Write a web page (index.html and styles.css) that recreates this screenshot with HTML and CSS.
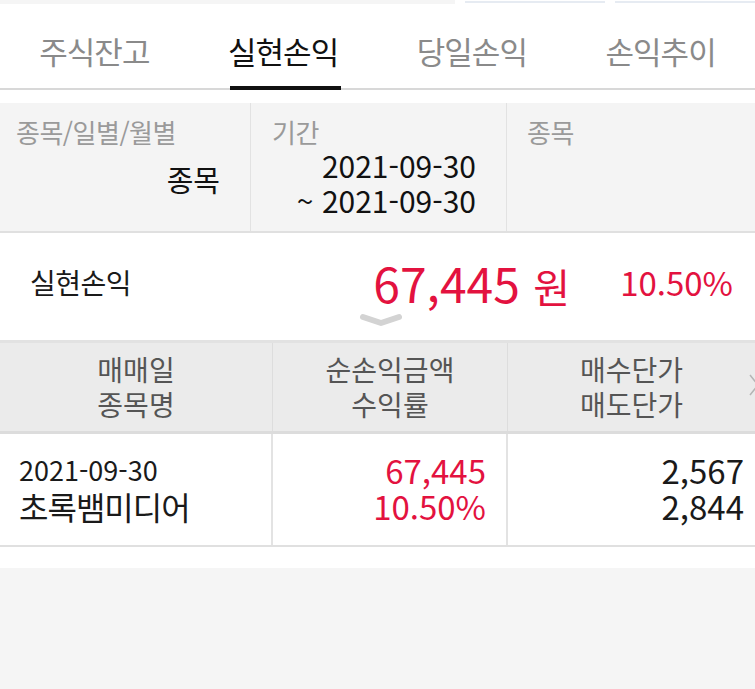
FILE: index.html
```html
<!DOCTYPE html>
<html lang="ko">
<head>
    <meta charset="UTF-8">
    <meta name="viewport" content="width=device-width, initial-scale=1.0">
    <title>실현손익</title>
    <link rel="stylesheet" href="styles.css">
</head>
<body>
    <div class="topbar">
        <div class="topbar-left"></div>
        <div class="topbar-line"></div>
        <div class="topbar-line"></div>
    </div>
    <div class="tabs">
        <div class="tab">주식잔고</div>
        <div class="tab active">실현손익</div>
        <div class="tab">당일손익</div>
        <div class="tab">손익추이</div>
    </div>

    <div class="filter">
        <div class="filter-col first">
            <div class="label">종목/일별/월별</div>
            <div class="value">종목</div>
        </div>
        <div class="filter-col second">
            <div class="label">기간</div>
            <div class="value dates">2021-09-30<br>~ 2021-09-30</div>
        </div>
        <div class="filter-col third">
            <div class="label">종목</div>
        </div>
    </div>

    <div class="summary">
        <div class="summary-title">실현손익</div>
        <div class="summary-amount">67,445 <span class="won">원</span></div>
        <div class="summary-rate">10.50%</div>
        <svg class="chevron" width="44" height="14" viewBox="0 0 44 14">
            <path d="M4 4 L22 10 L40 4" fill="none" stroke="#d3d3d3" stroke-width="6" stroke-linecap="round" stroke-linejoin="round"/>
        </svg>
    </div>

    <div class="table-head">
        <div class="th">매매일<br>종목명</div>
        <div class="th">순손익금액<br>수익률</div>
        <div class="th">매수단가<br>매도단가</div>
        <svg class="more" width="10" height="24" viewBox="0 0 10 24">
            <path d="M1 2 L9 12 L1 22" fill="none" stroke="#b5b5b5" stroke-width="1.5"/>
        </svg>
    </div>

    <div class="table-row">
        <div class="td left">
            <div class="date">2021-09-30</div>
            <div class="name">초록뱀미디어</div>
        </div>
        <div class="td right red">
            <div>67,445</div>
            <div>10.50%</div>
        </div>
        <div class="td right">
            <div>2,567</div>
            <div>2,844</div>
        </div>
    </div>

    <div class="spacer"></div>
    <div class="bottom"></div>
</body>
</html>
```

FILE: styles.css
```css
body {
    margin: 0;
    padding: 0;
    background-color: white;
    font-family: "Noto Sans CJK KR", sans-serif;
    color: #1a1a1a;
    width: 755px;
    overflow: hidden;
}
.topbar {
    display: flex;
    align-items: flex-start;
    gap: 10px;
    height: 5px;
}
.topbar-left {
    width: 455px;
    height: 4px;
    background-color: #f5f5f5;
}
.topbar-line {
    width: 140px;
    height: 2px;
    margin-top: 1px;
    background-color: #e6ebf2;
}
.tabs {
    display: grid;
    grid-template-columns: repeat(4, 1fr);
    height: 83px;
    border-bottom: 2px solid #d8d8d8;
}
.tab {
    display: flex;
    align-items: center;
    justify-content: center;
    font-size: 31px;
    color: #8a8a8a;
    letter-spacing: -1px;
    position: relative;
    padding-top: 8px;
}
.tab.active {
    color: #111;
}
.tab.active::after {
    content: "";
    position: absolute;
    left: 41px;
    right: 37px;
    bottom: -2px;
    height: 4px;
    background-color: #111;
}
.filter {
    margin-top: 13px;
    display: grid;
    grid-template-columns: 251px 256px 1fr;
    height: 128px;
    background-color: #f4f4f4;
    border-bottom: 2px solid #e0e0e0;
}
.filter-col {
    border-right: 1px solid #e2e2e2;
    padding: 10px 30px 0 16px;
    display: flex;
    flex-direction: column;
}
.filter-col.third {
    border-right: none;
    padding-left: 20px;
}
.filter-col.second {
    padding-left: 21px;
}
.label {
    font-size: 26px;
    color: #9a9a9a;
    letter-spacing: -0.5px;
}
.value {
    text-align: right;
    font-size: 30px;
    color: #111;
}
.first .value {
    font-size: 29px;
    margin-top: 8px;
}
.dates {
    line-height: 35px;
    margin-top: -2px;
}
.summary {
    position: relative;
    display: flex;
    align-items: center;
    padding: 0 22px 10px 30px;
    border-bottom: 3px solid #e2e2e2;
    box-sizing: border-box;
    height: 110px;
}
.summary-title {
    font-size: 28px;
    flex: 1;
    letter-spacing: -0.5px;
}
.summary-amount {
    font-size: 48px;
    color: #e3123f;
}
.won {
    font-size: 40px;
}
.summary-rate {
    font-size: 33px;
    color: #e3123f;
    margin-left: 50px;
}
.chevron {
    position: absolute;
    left: 359px;
    bottom: 13px;
}
.table-head {
    position: relative;
    display: grid;
    grid-template-columns: 273px 235px 1fr;
    height: 88px;
    background-color: #ebebeb;
    border-bottom: 3px solid #dcdcdc;
}
.th {
    display: flex;
    align-items: center;
    justify-content: center;
    text-align: center;
    font-size: 28px;
    line-height: 35px;
    color: #555;
    border-right: 1px solid #dddddd;
}
.th:last-of-type {
    border-right: none;
}
.more {
    position: absolute;
    right: -4px;
    top: 30px;
}
.table-row {
    display: grid;
    grid-template-columns: 273px 235px 1fr;
    height: 111px;
    border-bottom: 2px solid #e0e0e0;
}
.td {
    display: flex;
    flex-direction: column;
    justify-content: center;
    border-right: 2px solid #e3e3e3;
    font-size: 33px;
    line-height: 36px;
    padding-bottom: 4px;
}
.td:last-child {
    border-right: none;
}
.td.left {
    padding-left: 19px;
}
.td.right {
    align-items: flex-end;
    padding-right: 20px;
}
.td.right:last-child {
    padding-right: 11px;
}
.red {
    color: #e3123f;
}
.date {
    font-size: 27px;
}
.name {
    font-size: 32px;
    letter-spacing: -1px;
}
.spacer {
    height: 21px;
}
.bottom {
    height: 140px;
    background-color: #f5f5f5;
}
```
